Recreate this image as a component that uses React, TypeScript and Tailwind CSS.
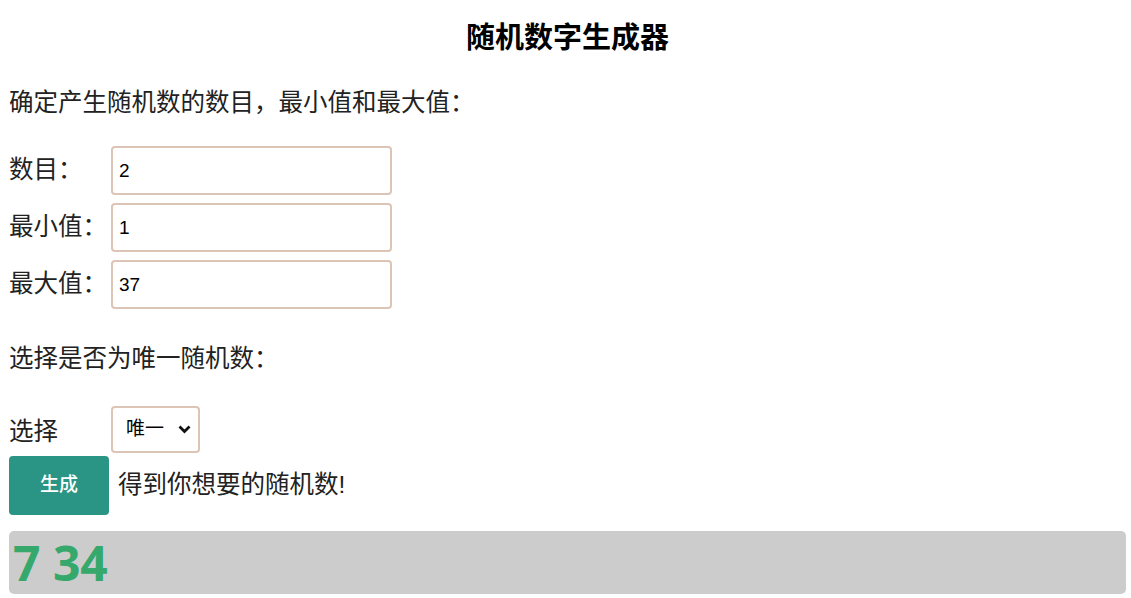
import { useState } from 'react'

const font = "font-['Liberation_Sans','Noto_Sans_CJK_SC',sans-serif]"

function Field({ label, value, onChange, first }: { label: string; value: string; onChange: (v: string) => void; first?: boolean }) {
  return (
    <div className={`flex items-center ${first ? '' : 'mt-[8px]'}`}>
      <label className="w-[102px] text-[24.5px] leading-none text-[#222]">{label}</label>
      <input
        type="text"
        value={value}
        onChange={e => onChange(e.target.value)}
        className="w-[281px] h-[49px] border-2 border-[#dcc4b6] rounded-[4px] px-[6px] text-[19px] text-black outline-none"
      />
    </div>
  )
}

export default function App() {
  const [count, setCount] = useState('2')
  const [min, setMin] = useState('1')
  const [max, setMax] = useState('37')
  const [unique, setUnique] = useState('unique')
  const [result, setResult] = useState('7 34')

  const generate = () => {
    const n = parseInt(count) || 0
    const lo = parseInt(min) || 0
    const hi = parseInt(max) || 0
    const out: number[] = []
    let guard = 0
    while (out.length < n && guard < 10000) {
      guard++
      const r = Math.floor(Math.random() * (hi - lo + 1)) + lo
      if (unique === 'unique' && out.includes(r)) continue
      out.push(r)
    }
    setResult(out.join(' '))
  }

  return (
    <div className={`${font} min-h-screen bg-white pl-[9px] pr-[5px]`}>
      <h2 className="pt-[18px] text-center text-[29px] leading-[40px] font-bold text-black">随机数字生成器</h2>

      <p className="mt-[27px] text-[24.5px] leading-[36px] text-[#222]">确定产生随机数的数目，最小值和最大值：</p>

      <div className="mt-[25px]">
        <Field label="数目：" value={count} onChange={setCount} first />
        <Field label="最小值：" value={min} onChange={setMin} />
        <Field label="最大值：" value={max} onChange={setMax} />
      </div>

      <p className="mt-[32px] text-[24.5px] leading-[36px] text-[#222]">选择是否为唯一随机数：</p>

      <div className="mt-[29px] flex items-center">
        <label className="w-[102px] pt-[6px] text-[24.5px] leading-none text-[#222]">选择</label>
        <div className="relative">
          <select
            value={unique}
            onChange={e => setUnique(e.target.value)}
            className="appearance-none w-[89px] h-[47px] border-2 border-[#dcc4b6] rounded-[4px] pl-[13px] text-[19px] text-black bg-white outline-none"
          >
            <option value="unique">唯一</option>
            <option value="repeat">可重复</option>
          </select>
          <svg className="pointer-events-none absolute right-[9px] top-[19px] w-[13px] h-[9px]" viewBox="0 0 13 9" fill="none">
            <path d="M1.5 1.5 L6.5 6.5 L11.5 1.5" stroke="#111" strokeWidth="2.8" />
          </svg>
        </div>
      </div>

      <div className="mt-[3px] flex items-center">
        <button
          onClick={generate}
          className="w-[100px] h-[59px] rounded-[4px] bg-[#2a9584] text-white text-[19px] font-medium"
        >
          生成
        </button>
        <span className="ml-[9px] text-[24.5px] leading-none text-[#222]">得到你想要的随机数!</span>
      </div>

      <div className="mt-[16px] h-[63px] rounded-[5px] bg-[#cccccc] flex items-center pl-[4px]">
        <span className="font-['Open_Sans',sans-serif] font-bold text-[48px] leading-none text-[#36a86b]">{result}</span>
      </div>
    </div>
  )
}
